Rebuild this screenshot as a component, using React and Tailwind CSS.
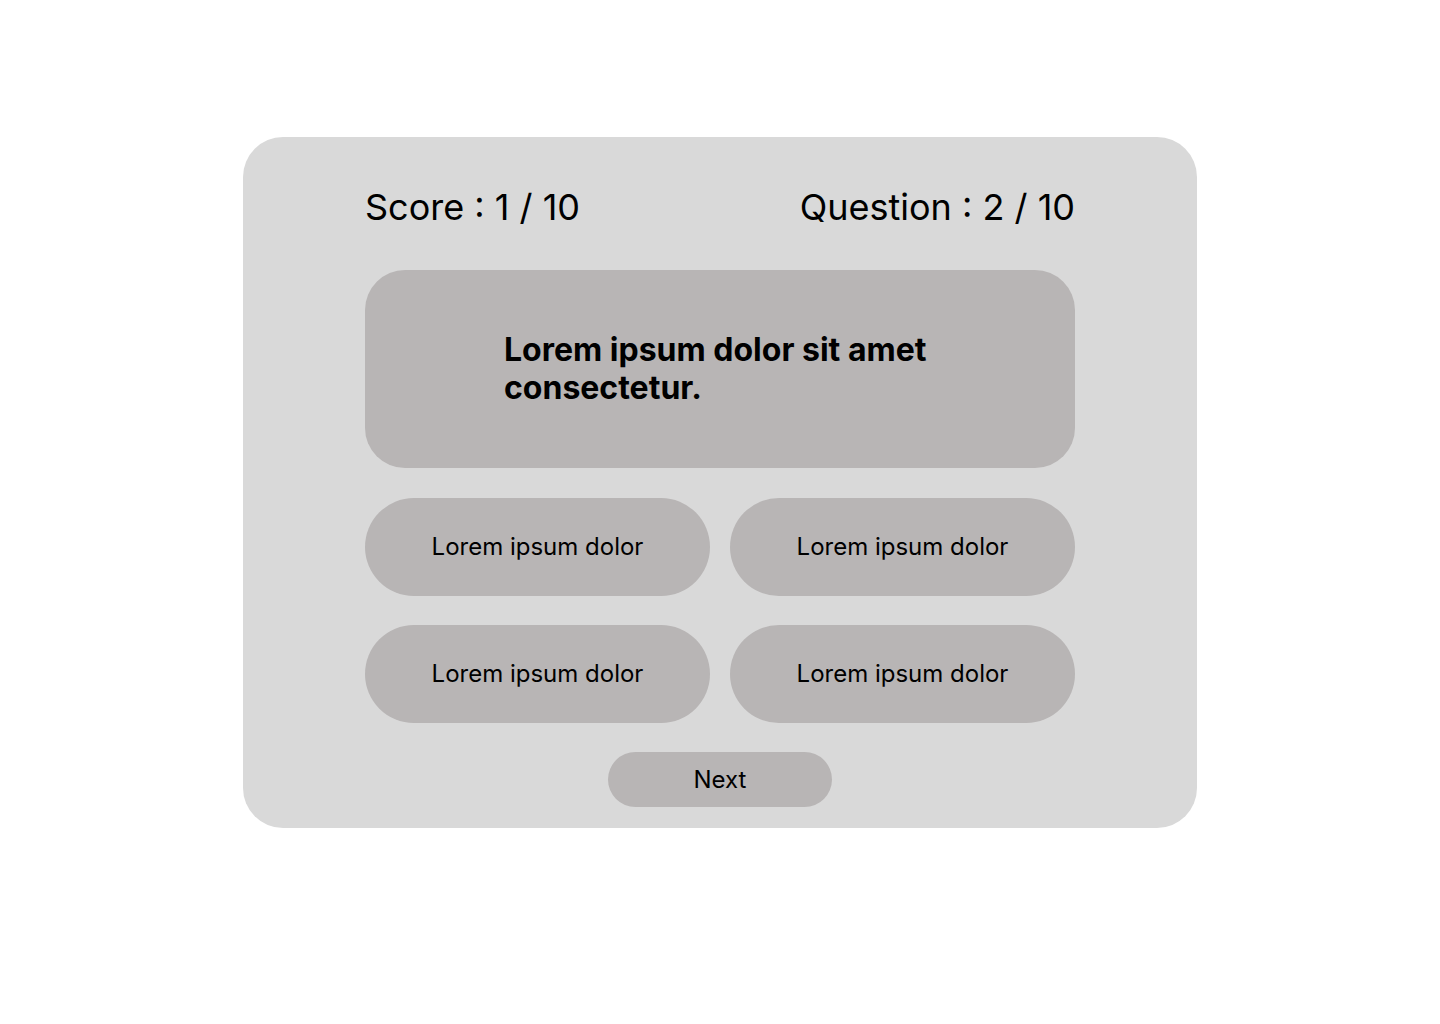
import React from 'react';

const answers = ['Lorem ipsum dolor', 'Lorem ipsum dolor', 'Lorem ipsum dolor', 'Lorem ipsum dolor'];

const QuizCard = ({ score = 1, question = 2, total = 10 }) => (
  <div className="mx-auto flex w-[954px] flex-col items-center rounded-[40px] bg-[#d9d9d9] px-[122px] pb-[21px] pt-[48px]">
    <div className="flex w-full items-center justify-between text-[36px] leading-[44px] text-black">
      <span>{`Score : ${score} / ${total}`}</span>
      <span>{`Question : ${question} / ${total}`}</span>
    </div>

    {/* question text */}
    <div className="mt-[41px] flex h-[198px] w-full items-center justify-center rounded-[40px] bg-[#b8b5b5]">
      <p className="w-[432px] text-[32px] font-bold leading-[38px] text-black">
        Lorem ipsum dolor sit amet consectetur.
      </p>
    </div>

    <div className="mt-[30px] grid w-full grid-cols-2 gap-x-[20px] gap-y-[29px]">
      {answers.map((a, i) => (
        <button
          key={i}
          type="button"
          className="flex h-[98px] items-center justify-center rounded-full bg-[#b8b5b5] text-[24px] text-black"
        >
          {a}
        </button>
      ))}
    </div>

    <button
      type="button"
      className="mt-[29px] flex h-[55px] w-[224px] items-center justify-center rounded-full bg-[#b8b5b5] text-[24px] text-black"
    >
      Next
    </button>
  </div>
);

const App = () => (
  <div className="h-screen w-full overflow-hidden bg-white pt-[137px] font-['Inter',sans-serif]">
    <QuizCard />
  </div>
);

export default App;
